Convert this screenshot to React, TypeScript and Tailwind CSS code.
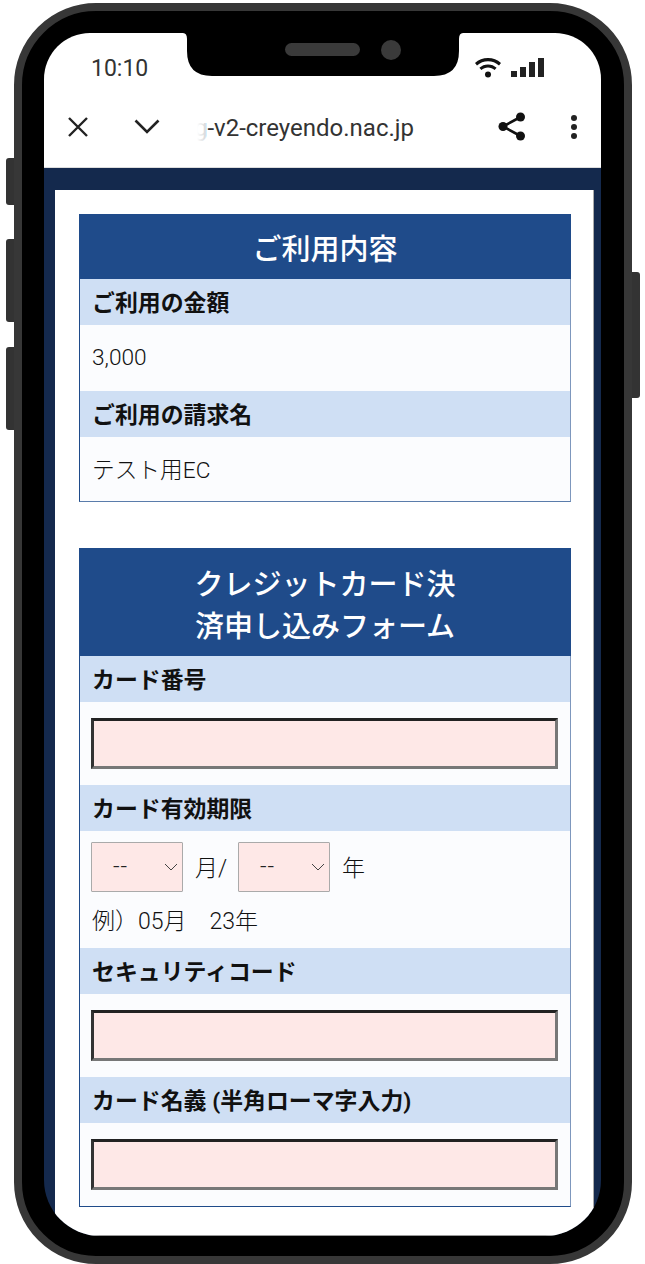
const jp = "font-['Roboto','Noto_Sans_CJK_JP',sans-serif]";

function Label({ children }: { children: React.ReactNode }) {
  return (
    <div className="flex h-[46px] items-center bg-[#cfdff4] pt-[5px] pl-3 text-[22.9px] leading-none font-bold text-[#111]">
      {children}
    </div>
  );
}

function TextBox() {
  return (
    <div className="pt-[16px] pr-3 pb-[16px] pl-[11px]">
      <div className="h-[51px] border-[3px] border-t-[#222] border-r-[#777] border-b-[#777] border-l-[#333] bg-[#fee8e7]" />
    </div>
  );
}

function Select() {
  return (
    <div className="flex h-[50px] w-[92px] items-center justify-between rounded-[1px] border border-[#aaa] bg-[#fee8e7] pr-[4px] pl-[21px] text-[23px] tracking-[1px] text-[#222]">
      <span>--</span>
      <svg width="14" height="8" viewBox="0 0 14 8" fill="none" stroke="#444" strokeWidth="1">
        <path d="M1 1l6 6 6-6" />
      </svg>
    </div>
  );
}

export default function App() {
  return (
    <div className={`relative h-[1264px] w-[645px] overflow-hidden bg-white ${jp}`}>
      {/* side buttons */}
      <div className="absolute top-[158px] left-[6px] h-[47px] w-[10px] rounded-l-[3px] bg-[#333]" />
      <div className="absolute top-[239px] left-[6px] h-[83px] w-[10px] rounded-l-[3px] bg-[#333]" />
      <div className="absolute top-[347px] left-[6px] h-[83px] w-[10px] rounded-l-[3px] bg-[#333]" />
      <div className="absolute top-[272px] left-[630px] h-[126px] w-[10px] rounded-r-[3px] bg-[#333]" />

      <div className="absolute top-[3px] left-[14px] h-[1261px] w-[618px] rounded-[82px] border-[8px] border-[#373737] bg-black pt-[22px] pr-[23px] pb-[20px] pl-[22px]">
        <div className="relative h-full overflow-hidden rounded-t-[46px] rounded-b-[56px]">
          {/* notch */}
          <div className="absolute top-0 left-[139px] z-10 h-[43px] w-[280px]">
            <svg width="280" height="43" viewBox="0 0 280 43" fill="#000">
              <path d="M0 0Q4 0 4 6V18Q4 43 29 43H251Q276 43 276 18V6Q276 0 280 0Z" />
            </svg>
            <div className="absolute top-[10px] left-[102px] h-[13px] w-[75px] rounded-full bg-[#3a3a3a]" />
            <div className="absolute top-[7px] left-[198px] h-[20px] w-[20px] rounded-full bg-[#3a3a3a]" />
          </div>

          <div className="flex h-[135px] flex-col border-b border-[#ddd] bg-white">
            <div className="flex h-[70px] items-center justify-between pt-[4px] pr-[56px] pl-[47px] text-[23px] text-[#333]">
              <span>10:10</span>
              <div className="-mt-[4px] flex items-center gap-[10px]">
                <svg width="26" height="20" viewBox="0 0 26 20" fill="#111">
                  <path d="M13 0C8 0 3.600 1.800 0 5l2 2.400C5.100 4.700 8.900 3.200 13 3.200s7.900 1.500 11 4.200L26 5C22.400 1.800 18 0 13 0z" />
                  <path d="M13 6.500c-3.300 0-6.300 1.200-8.600 3.300l2 2.300c1.800-1.600 4.100-2.500 6.600-2.500s4.800 .9 6.600 2.500l2-2.300C19.300 7.700 16.300 6.500 13 6.500z" />
                  <circle cx="13" cy="16.500" r="3" />
                </svg>
                <svg width="34" height="20" viewBox="0 0 34 20" fill="#222">
                  <rect x="0" y="13" width="6" height="6" />
                  <rect x="9" y="9" width="6" height="10" />
                  <rect x="18" y="4" width="6" height="15" />
                  <rect x="27" y="0" width="6" height="19" />
                </svg>
              </div>
            </div>
            <div className="flex h-[65px] items-center pr-[21px] pb-[16px] pl-[24px]">
              <svg width="20" height="20" viewBox="0 0 20 20" stroke="#222" strokeWidth="2.400" fill="none">
                <path d="M1 1l18 18M19 1L1 19" />
              </svg>
              <svg className="ml-[46px]" width="26" height="15" viewBox="0 0 26 15" stroke="#222" strokeWidth="2.600" fill="none">
                <path d="M1.500 1.500L13 13 24.500 1.500" />
              </svg>
              <div className="relative ml-[37px] flex w-[217px] justify-end overflow-hidden pt-[2px] text-[24px] whitespace-nowrap text-[#333]">
                <span>g-v2-creyendo.nac.jp</span>
                <div className="absolute inset-y-0 left-0 w-[9px] bg-gradient-to-r from-white to-white/80" />
              </div>
              <svg className="ml-[84px]" width="28" height="29" viewBox="0 0 28 29" fill="#111" stroke="#111">
                <circle cx="22.500" cy="5" r="4.500" stroke="none" />
                <circle cx="5" cy="14.500" r="4.500" stroke="none" />
                <circle cx="22.500" cy="24" r="4.500" stroke="none" />
                <path d="M22.500 5L5 14.500l17.500 9.500" strokeWidth="2.600" fill="none" />
              </svg>
              <div className="ml-[45px] flex flex-col gap-[3px]">
                <div className="h-[6px] w-[6px] rounded-full bg-[#222]" />
                <div className="h-[6px] w-[6px] rounded-full bg-[#222]" />
                <div className="h-[6px] w-[6px] rounded-full bg-[#222]" />
              </div>
            </div>
          </div>

          <div className="h-[1068px] bg-[#14294d] pt-[22px] pr-[7px] pl-[11px]">
            <div className="h-[1046px] border-r border-b border-r-[#aaa] border-b-[#999] bg-white pt-[24px] pr-[22px] pl-[24px]">
              <section className="h-[288px] border border-[#1f4b8a] border-r-[#7d97bd] border-b-[#5a7cab] bg-[#fbfcfe]">
                <h2 className="-mx-px -mt-px flex h-[65px] items-center justify-center bg-[#1f4b8a] pt-[8px] text-[29px] font-medium text-white">
                  ご利用内容
                </h2>
                <Label>ご利用の金額</Label>
                <p className="flex h-[66px] items-center pl-3 text-[22.7px] font-light text-[#111]">3,000</p>
                <Label>ご利用の請求名</Label>
                <p className="flex h-[64px] items-center pt-[5px] pl-3 text-[22.7px] font-light text-[#111]">テスト用EC</p>
              </section>

              <section className="mt-[46px] h-[659px] border border-[#1f4b8a] border-r-[#7d97bd] bg-[#fbfcfe]">
                <h2 className="-mx-px -mt-px flex h-[108px] items-center justify-center bg-[#1f4b8a] pt-[8px] text-center text-[29px] leading-[42px] font-medium text-white">
                  クレジットカード決
                  <br />
                  済申し込みフォーム
                </h2>
                <Label>カード番号</Label>
                <TextBox />
                <Label>カード有効期限</Label>
                <div className="h-[117px] pt-[11px] pl-[11px] text-[23px] font-light text-[#111]">
                  <div className="flex items-center">
                    <Select />
                    <span className="mt-[4px] ml-[12px] w-[43px]">月/</span>
                    <Select />
                    <span className="mt-[4px] ml-[12px]">年</span>
                  </div>
                  <p className="mt-[13px] pl-px leading-[34px]">例）05月　23年</p>
                </div>
                <Label>セキュリティコード</Label>
                <TextBox />
                <Label>カード名義 (半角ローマ字入力)</Label>
                <TextBox />
              </section>
            </div>
          </div>
        </div>
      </div>
    </div>
  );
}
